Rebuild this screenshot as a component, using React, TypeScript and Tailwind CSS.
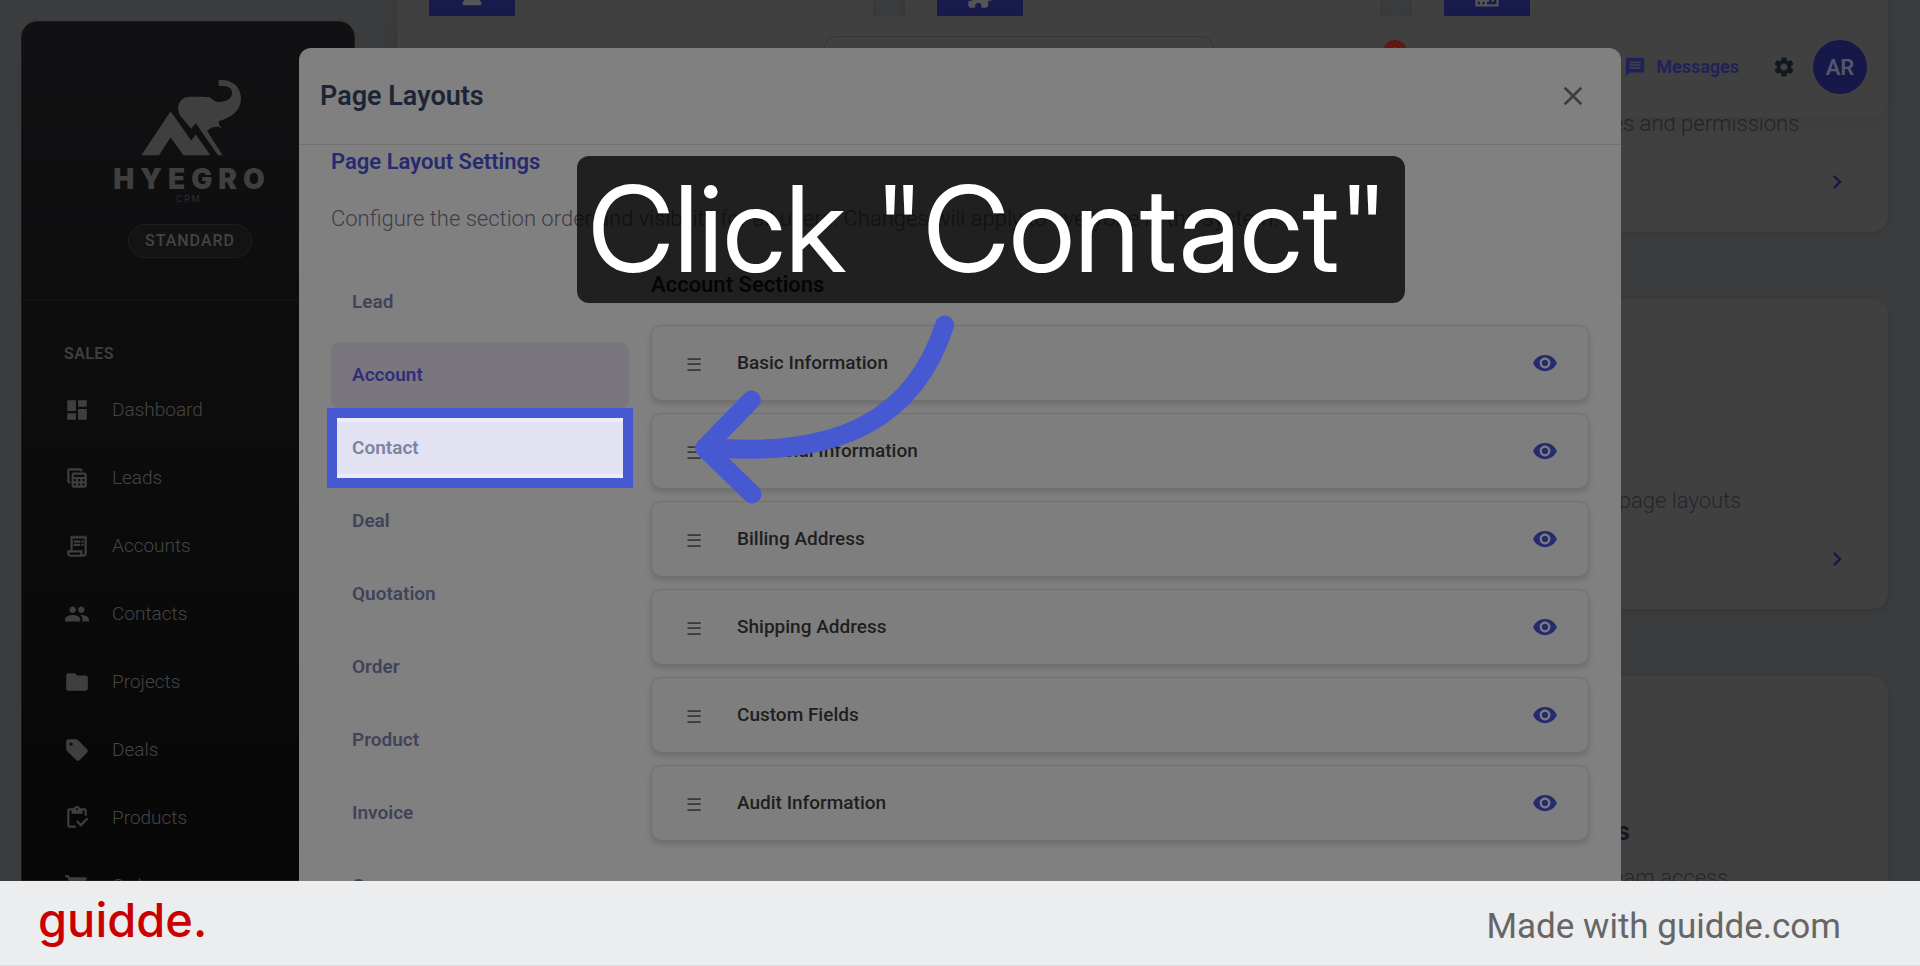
import type { ReactNode } from 'react';
import type { IconType } from 'react-icons';
import {
  MdBusiness,
  MdChevronRight,
  MdClose,
  MdDashboard,
  MdExtension,
  MdFolder,
  MdMessage,
  MdOutlineInventory,
  MdOutlineReceiptLong,
  MdPeople,
  MdPerson,
  MdSell,
  MdSettings,
  MdShoppingCart,
  MdTableView,
  MdVisibility,
} from 'react-icons/md';
import { clsx } from 'clsx';

const navItems: { label: string; icon: IconType }[] = [
  { label: 'Dashboard', icon: MdDashboard },
  { label: 'Leads', icon: MdTableView },
  { label: 'Accounts', icon: MdOutlineReceiptLong },
  { label: 'Contacts', icon: MdPeople },
  { label: 'Projects', icon: MdFolder },
  { label: 'Deals', icon: MdSell },
  { label: 'Products', icon: MdOutlineInventory },
  { label: 'Orders', icon: MdShoppingCart },
];

const settingCards: { title: string; text: string; icon: IconType; textWidth?: string }[] = [
  { title: 'Profile', text: 'Manage your profile', icon: MdPerson },
  { title: 'Integrations', text: 'Connect other tools', icon: MdExtension },
  { title: 'Users', text: 'Manage users, roles and permissions', icon: MdBusiness, textWidth: 'w-[355px]' },
  { title: 'Pipelines', text: 'Set up your deal stages', icon: MdPerson },
  { title: 'Templates', text: 'Email and print templates', icon: MdExtension },
  { title: 'Page Layouts', text: 'Customize fields, page layouts', icon: MdBusiness, textWidth: 'w-[297px]' },
  { title: 'Import', text: 'Bring in your records', icon: MdPerson },
  { title: 'Export', text: 'Download your records', icon: MdExtension },
  { title: 'Teams & Groups', text: 'Manage groups, team access', icon: MdBusiness, textWidth: 'w-[284px]' },
];

const tabs = ['Lead', 'Account', 'Contact', 'Deal', 'Quotation', 'Order', 'Product', 'Invoice', 'Case'];

const sections = [
  'Basic Information',
  'Financial Information',
  'Billing Address',
  'Shipping Address',
  'Custom Fields',
  'Audit Information',
];

function Logo() {
  return (
    <div className="flex flex-col items-center text-[#3f3f3f]">
      <svg viewBox="420 235 310 235" className="ml-1 h-[78px] w-[103px]" fill="currentColor" aria-hidden="true">
        <path d="M424 465 512 332l62 88 14-18 44 63h-81l-39-54-35 54Z" />
        <path d="M657 238c40-3 67 20 67 55 0 34-24 57-67 69l1 11 10 11c-16-9-32-6-46 8l47 73h-14l-67-97-14 17-34-41c-10-20-6-42 15-53 8-4 40-3 74-2 8 5 14 15 28 15 24 0 40-10 40-27 0-19-17-22-40-21Z" />
      </svg>
      <div className="mt-1 pl-[6px] font-[Inter] text-[28px] leading-9 font-black tracking-[6px]">HYEGRO</div>
      <div className="-mt-1 text-[9px] leading-3 font-light tracking-[2px]">CRM</div>
    </div>
  );
}

function Sidebar() {
  return (
    <aside className="mt-[21px] w-[334px] shrink-0 rounded-t-2xl border border-[#1b1b1b] bg-linear-to-b from-[#111113] to-[#070707]">
      <div className="flex flex-col items-center gap-[19px] pt-[57px] pl-[2px]">
        <Logo />
        <span className="ml-[2px] rounded-full border border-[#1e1e1e] bg-[#131314] px-4 text-base leading-8 font-medium tracking-[1px] text-[#444]">
          STANDARD
        </span>
      </div>
      <hr className="mt-[42px] border-[#151515]" />
      <h2 className="mt-[41px] pl-[42px] text-base leading-6 font-semibold tracking-wide text-[#3f3f3f]">SALES</h2>
      <nav className="mt-[10px]">
        {navItems.map(({ label, icon: Icon }) => (
          <a key={label} href="#" className="flex h-[68px] items-center gap-[22px] pl-[42px] text-[19px] font-light text-[#454545]">
            <Icon className="size-[26px] text-[#3f3f3f]" />
            {label}
          </a>
        ))}
      </nav>
    </aside>
  );
}

function TopBar() {
  return (
    <header className="absolute inset-x-0 top-4 flex h-[101px] items-start justify-end rounded-b-2xl bg-[#404040] pt-6 shadow-[0_8px_24px_rgba(0,0,0,0.06)]">
      <input
        aria-label="Search"
        className="absolute top-5 left-[427px] h-14 w-[390px] rounded-xl border border-[#353535]"
      />
      <span className="absolute top-6 left-[986px] flex size-6 items-center justify-center rounded-full bg-[#5f1812] text-xs text-[#555]">
        1
      </span>
      <div className="flex h-[54px] items-center pr-[21px]">
        <button className="flex items-center gap-[10px] text-lg font-semibold text-[#20205c]">
          <MdMessage className="size-[22px]" />
          Messages
        </button>
        <button aria-label="Settings" className="ml-[33px] text-[#11181f]">
          <MdSettings className="size-6" />
        </button>
        <button className="ml-[17px] size-[54px] rounded-full bg-[#17184a] text-[22px] font-semibold text-[#55556b]">
          AR
        </button>
      </div>
    </header>
  );
}

function SettingsPage() {
  return (
    <div className="relative mr-8 ml-[42px] min-w-0 flex-1">
      {/* scrolled part of the way down, so the first row starts above the window */}
      <div className="-mt-[78px] grid grid-cols-3 gap-x-8 gap-y-[67px]">
        {settingCards.map(({ title, text, icon: Icon, textWidth }) => (
          <article key={title} className="h-[310px] rounded-2xl bg-[#404040] px-8 pt-[54px] shadow-[0_3px_6px_rgba(0,0,0,0.1)]">
            <div className="flex h-10 w-[86px] items-center justify-center bg-[#1a1b4d] text-[#555]">
              <Icon className="size-7" />
            </div>
            <h3 className="mt-[46px] text-[25px] leading-8 font-bold whitespace-nowrap text-[#11181f]">{title}</h3>
            <p className={clsx('mt-3 flex justify-end text-[22px] leading-9 font-light whitespace-nowrap text-[#25252d]', textWidth)}>
              {text}
            </p>
            <a href="#" aria-label={title} className="mt-[26px] flex justify-end pr-[5px] text-[#17184a]">
              <MdChevronRight className="size-7" />
            </a>
          </article>
        ))}
      </div>
      <TopBar />
    </div>
  );
}

function TabButton({ label }: { label: string }) {
  const focused = label === 'Contact';

  return (
    <li className="relative">
      {focused && (
        <span className="absolute -inset-x-1 -inset-y-[7px] border-10 border-[#4759d1]">
          <span className="block h-full border-y-4 border-[#ececfa] bg-[#e2e2f2]" />
        </span>
      )}
      <button
        className={clsx(
          'relative h-[66px] w-full rounded-lg px-[21px] text-left text-[19px] font-semibold',
          label === 'Account' && 'bg-[#79777d] text-[#302d7b]',
          focused && 'text-[#7d849f]',
          label !== 'Account' && !focused && 'text-[#40435a]',
        )}
      >
        {label}
      </button>
    </li>
  );
}

function SectionRow({ label }: { label: string }) {
  return (
    <li className="flex h-[76px] items-center rounded-[10px] border border-[#717171] bg-[#7e7e7e] px-[30px] shadow-[0_3px_6px_rgba(0,0,0,0.16)]">
      <span className="w-[55px] pt-1 pl-1 text-lg leading-none text-[#3a3a3a]">☰</span>
      <span className="flex-1 text-[19px] font-medium text-[#1e1e1e]">{label}</span>
      <button aria-label={`Show or hide ${label}`} className="text-[#262a70]">
        <MdVisibility className="size-[26px]" />
      </button>
    </li>
  );
}

function LayoutDialog() {
  return (
    <section
      role="dialog"
      aria-label="Page Layouts"
      className="h-full w-full max-w-[1322px] rounded-t-xl bg-[#808080]"
    >
      <div className="flex h-[97px] items-center justify-between border-b border-[#717171] pr-8 pl-[21px]">
        <h1 className="text-[27px] font-semibold text-[#1c2536]">Page Layouts</h1>
        <button aria-label="Close" className="text-[#3c3c3c]">
          <MdClose className="size-8" />
        </button>
      </div>
      <div className="px-8">
        <h2 className="text-[22px] leading-[34px] font-semibold text-[#262a70]">Page Layout Settings</h2>
        <p className="mt-[22px] text-[22px] leading-9 font-light text-[#3d3d4c]">
          Configure the section order and visibility for all users. Changes will apply to everyone in the system.
        </p>
        <div className="mt-8 flex gap-[22px]">
          <ul className="flex w-[298px] shrink-0 flex-col gap-[7px]">
            {tabs.map((tab) => (
              <TabButton key={tab} label={tab} />
            ))}
          </ul>
          <div className="flex-1">
            <h3 className="text-[22px] leading-8 font-semibold text-[#15161c]">Account Sections</h3>
            <ul className="mt-6 flex flex-col gap-3">
              {sections.map((section) => (
                <SectionRow key={section} label={section} />
              ))}
            </ul>
          </div>
        </div>
      </div>
    </section>
  );
}

function Layer({ className, children }: { className?: string; children: ReactNode }) {
  return <div className={clsx('absolute inset-0', className)}>{children}</div>;
}

export default function App() {
  return (
    <div className="flex h-screen flex-col font-[Roboto,sans-serif]">
      <main className="relative flex-1 overflow-hidden bg-[#3b3c3d]">
        <Layer className="flex pl-[21px]">
          <Sidebar />
          <SettingsPage />
        </Layer>
        <Layer className="flex justify-center pt-12">
          <LayoutDialog />
        </Layer>
        <div className="absolute top-[156px] left-[577px] flex h-[147px] w-[828px] items-center rounded-xl bg-black/75 pl-[11px] font-['Inter_Display',Inter,sans-serif] text-[119px] leading-none whitespace-nowrap text-white">
          Click "Contact"
        </div>
        <svg
          viewBox="160 100 801 591"
          className="absolute top-[313px] left-[693px] h-[197px] w-[267px]"
          fill="none"
          stroke="#4759d1"
          strokeWidth="57"
          strokeLinecap="round"
          strokeLinejoin="round"
          aria-hidden="true"
        >
          <path d="M915 136C830 400 620 540 197 503" />
          <path d="M335 361 195 505l142 138" />
        </svg>
      </main>
      <footer className="flex h-[85px] shrink-0 items-center justify-between border-b border-[#dcdde0] bg-[#ecedef] pr-[79px] pl-[38px]">
        <a href="#" className="pb-2 font-[Inter] text-[47px] leading-none font-medium text-[#c80000]">
          guidde.
        </a>
        <p className="pt-2 text-[35px] text-[#666]">Made with guidde.com</p>
      </footer>
    </div>
  );
}
